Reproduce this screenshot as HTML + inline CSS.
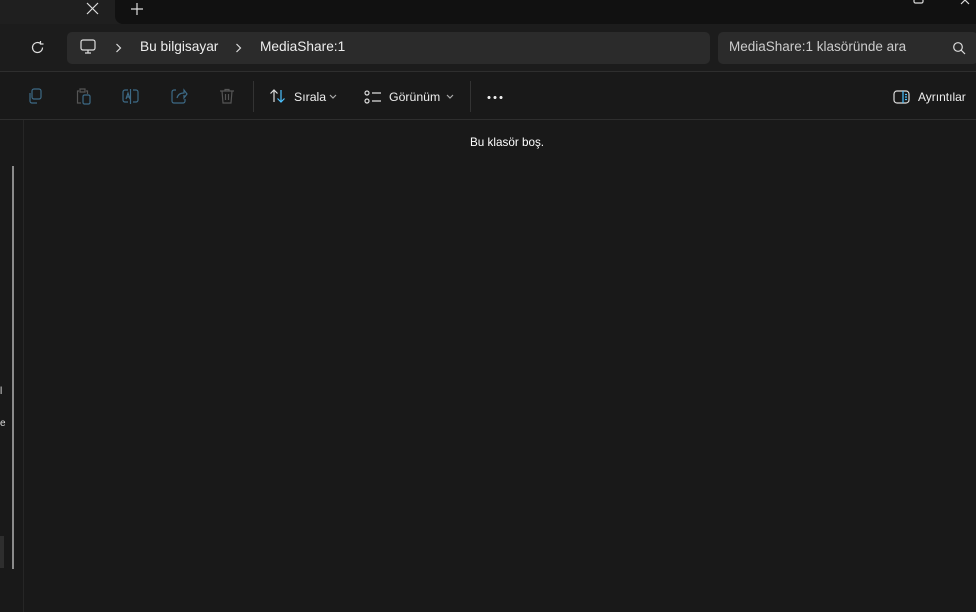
<!DOCTYPE html>
<html><head><meta charset="utf-8"><style>
*{margin:0;padding:0;box-sizing:border-box}
body{width:976px;height:612px;background:#191919;font-family:"Segoe UI","Liberation Sans",sans-serif;color:#fff;position:relative;overflow:hidden;font-size:13px}
.a{position:absolute}
svg{position:absolute;fill:none;stroke-width:1.2}
</style></head><body>
<div class="a" style="left:0;top:0;width:976px;height:24px;background:#1f1f1f"></div>
<div class="a" style="left:115px;top:0;width:861px;height:24px;background:#111;border-bottom-left-radius:8px"></div>
<svg style="left:86px;top:2px" width="13" height="13" stroke="#ddd"><path d="M1 1L12 12M12 1L1 12"/></svg>
<svg style="left:130px;top:2px" width="14" height="14" stroke="#ddd"><path d="M7 1V13M1 7H13"/></svg>
<svg style="left:913px;top:-4px" width="12" height="9" stroke="#ddd"><rect x="1" y="0" width="9" height="7" rx="1.5"/></svg>
<svg style="left:960px;top:-4px" width="12" height="10" stroke="#ddd"><path d="M1 0L9 8M9 0L1 8"/></svg>
<div class="a" style="left:0;top:24px;width:976px;height:48px;background:#1c1c1c;border-bottom:1px solid #2e2e2e"></div>
<svg style="left:30px;top:40px" width="15" height="15" stroke="#ddd"><path d="M12.5 7.5A5 5 0 1 1 10.5 3.5M10.5 1V4H13.5"/></svg>
<div class="a" style="left:67px;top:32px;width:643px;height:32px;background:#2b2b2b;border-radius:5px"></div>
<svg style="left:80px;top:39px" width="17" height="16" stroke="#ddd"><rect x="1" y="1" width="14" height="10" rx="2"/><path d="M5 14H11M8 11V14"/></svg>
<svg style="left:115px;top:43px" width="7" height="10" stroke="#ddd"><path d="M1.5 1L5.5 5L1.5 9"/></svg>
<div class="a" style="left:140px;top:39px;font-size:13.7px;color:#eee">Bu bilgisayar</div>
<svg style="left:235px;top:43px" width="7" height="10" stroke="#ddd"><path d="M1.5 1L5.5 5L1.5 9"/></svg>
<div class="a" style="left:260px;top:39px;font-size:13.7px;color:#eee">MediaShare:1</div>
<div class="a" style="left:718px;top:32px;width:260px;height:32px;background:#2b2b2b;border-radius:5px"></div>
<div class="a" style="left:729px;top:39px;font-size:13.5px;color:#ccc">MediaShare:1 klasöründe ara</div>
<svg style="left:952px;top:41px" width="14" height="14" stroke="#ddd"><circle cx="6" cy="6" r="4.3"/><path d="M9.2 9.2L13 13"/></svg>
<div class="a" style="left:0;top:119px;width:976px;height:1px;background:#2e2e2e"></div>
<svg style="left:27px;top:88px" width="16" height="16" stroke="#3d6a86"><rect x="5" y="1" width="9" height="10" rx="2"/><path d="M3 5V13a2 2 0 0 0 2 2H10"/></svg>
<svg style="left:75px;top:88px" width="16" height="17" stroke="#555"><path d="M4 3H2.5V15H6M11 3H12.5V6M5 1H10V4H5Z"/><rect x="8" y="7" width="7" height="9" rx="1.5" stroke="#3d6a86"/></svg>
<svg style="left:122px;top:88px" width="17" height="17" stroke="#3d6a86"><path d="M6 2H3A2 2 0 0 0 1 4V12A2 2 0 0 0 3 14H6M11 2H14A2 2 0 0 1 16 4V12A2 2 0 0 1 14 14H11M8.5 1V16M4 11L6 5L8 11M4.7 9H7.3"/></svg>
<svg style="left:171px;top:88px" width="17" height="16" stroke="#3d6a86"><path d="M5 2H3A2 2 0 0 0 1 4V13A2 2 0 0 0 3 15H12A2 2 0 0 0 14 13V11M6 10C7 6 10 5 13 5V2L16 6L13 10V7"/></svg>
<svg style="left:219px;top:88px" width="16" height="17" stroke="#555"><path d="M1 3H15M6 3V1.5H10V3M3 3L4 15H12L13 3M6.5 6V12M9.5 6V12"/></svg>
<div class="a" style="left:253px;top:81px;width:1px;height:31px;background:#333"></div>
<svg style="left:269px;top:88px" width="18" height="16" stroke="#ddd"><path d="M5 14V2M1.5 5.5L5 2L8.5 5.5"/><path d="M12 2V14M8.5 10.5L12 14L15.5 10.5" stroke="#4cc2ff"/></svg>
<div class="a" style="left:294px;top:90px;font-size:12.3px;color:#eee">Sırala</div>
<svg style="left:329px;top:94px" width="8" height="6" stroke="#aaa"><path d="M1 1L4 4L7 1"/></svg>
<svg style="left:364px;top:89px" width="18" height="16" stroke="#ddd"><rect x="1" y="2" width="4" height="4" rx="2"/><rect x="1" y="10" width="4" height="4" rx="2"/><path d="M8 4H17M8 12H17"/></svg>
<div class="a" style="left:389px;top:90px;font-size:12.3px;color:#eee">Görünüm</div>
<svg style="left:446px;top:94px" width="8" height="6" stroke="#aaa"><path d="M1 1L4 4L7 1"/></svg>
<div class="a" style="left:470px;top:81px;width:1px;height:31px;background:#333"></div>
<div class="a" style="left:486px;top:96px;width:17px;height:3px;background:radial-gradient(circle,#eee 1.4px,transparent 1.6px) 0 0/6px 3px"></div>
<svg style="left:893px;top:90px" width="18" height="14" stroke="#ddd"><rect x="1" y="1" width="15" height="12" rx="3"/><path d="M10 1V13" stroke="#4cc2ff"/><path d="M12 4.5H14M12 7H14M12 9.5H14" stroke="#4cc2ff"/></svg>
<div class="a" style="left:918px;top:90px;font-size:12px;color:#eee">Ayrıntılar</div>
<div class="a" style="left:23px;top:120px;width:1px;height:492px;background:#262626"></div>
<div class="a" style="left:12px;top:166px;width:2px;height:403px;background:#8a8a8a"></div>
<div class="a" style="left:0;top:536px;width:4px;height:32px;background:#2e2e2e"></div>
<div class="a" style="left:0;top:386px;font-size:10px;color:#ddd">l</div>
<div class="a" style="left:0;top:418px;font-size:10px;color:#ddd">e</div>
<div class="a" style="left:470px;top:136px;font-size:11.7px;color:#fff">Bu klasör boş.</div>
</body></html>
